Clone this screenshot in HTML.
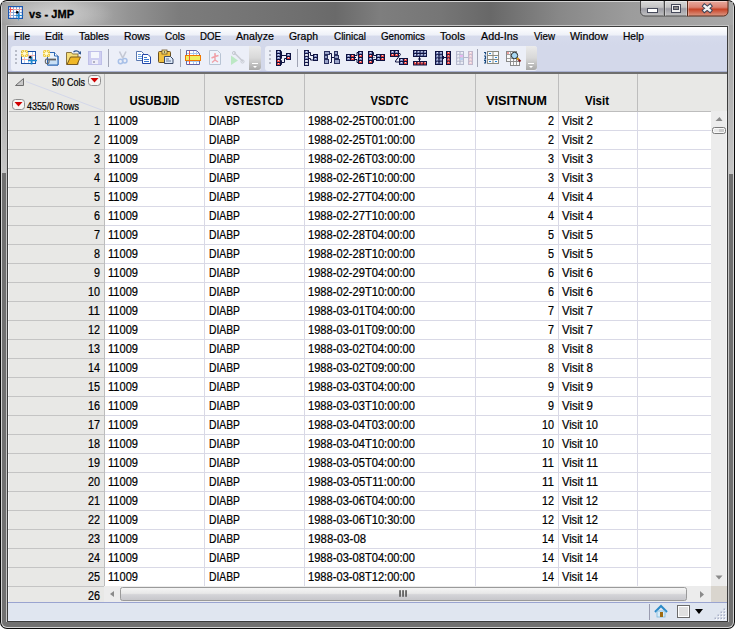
<!DOCTYPE html>
<html><head><meta charset="utf-8"><title>vs - JMP</title>
<style>html,body{margin:0;padding:0;background:#fff;width:735px;height:629px;overflow:hidden}svg{display:block}text{font-family:"Liberation Sans",sans-serif;stroke:#000;stroke-width:0.22px}</style>
</head><body>
<svg width="735" height="629" viewBox="0 0 735 629" font-family="Liberation Sans, sans-serif"><defs>
<linearGradient id="gTitle" x1="0" y1="0" x2="1" y2="0">
 <stop offset="0" stop-color="#9c9c9c"/>
 <stop offset="0.025" stop-color="#a8a8a8"/>
 <stop offset="0.08" stop-color="#b6b6b6"/>
 <stop offset="0.134" stop-color="#a6a6a6"/>
 <stop offset="0.175" stop-color="#939393"/>
 <stop offset="0.243" stop-color="#7c7c7c"/>
 <stop offset="0.408" stop-color="#6f6f6f"/>
 <stop offset="0.456" stop-color="#6a6a6a"/>
 <stop offset="0.517" stop-color="#7e7e7e"/>
 <stop offset="0.6" stop-color="#767676"/>
 <stop offset="0.668" stop-color="#686868"/>
 <stop offset="0.763" stop-color="#888888"/>
 <stop offset="0.859" stop-color="#9c9c9c"/>
 <stop offset="1" stop-color="#a8a8a8"/>
</linearGradient>
<radialGradient id="gGlow" cx="0.5" cy="0.5" r="0.5">
 <stop offset="0" stop-color="#e4e4e4" stop-opacity="0.6"/>
 <stop offset="0.6" stop-color="#d8d8d8" stop-opacity="0.3"/>
 <stop offset="1" stop-color="#d0d0d0" stop-opacity="0"/>
</radialGradient>
<linearGradient id="gMenu" x1="0" y1="0" x2="0" y2="1">
 <stop offset="0" stop-color="#ffffff"/>
 <stop offset="0.45" stop-color="#eef1f8"/>
 <stop offset="0.5" stop-color="#d6dbec"/>
 <stop offset="1" stop-color="#d3d8ea"/>
</linearGradient>
<linearGradient id="gChev" x1="0" y1="0" x2="0" y2="1">
 <stop offset="0" stop-color="#ebebeb"/>
 <stop offset="0.5" stop-color="#d8d8d8"/>
 <stop offset="1" stop-color="#a9a9a9"/>
</linearGradient>
<linearGradient id="gBtn" x1="0" y1="0" x2="0" y2="1">
 <stop offset="0" stop-color="#dcdcdc"/>
 <stop offset="0.45" stop-color="#c4c4c4"/>
 <stop offset="0.55" stop-color="#9c9ca4"/>
 <stop offset="1" stop-color="#c4c4c4"/>
</linearGradient>
<linearGradient id="gClose" x1="0" y1="0" x2="0" y2="1">
 <stop offset="0" stop-color="#eab0a4"/>
 <stop offset="0.45" stop-color="#dc8474"/>
 <stop offset="0.58" stop-color="#c84428"/>
 <stop offset="1" stop-color="#dc9a86"/>
</linearGradient>
<linearGradient id="gThumbH" x1="0" y1="0" x2="0" y2="1">
 <stop offset="0" stop-color="#f6f6f6"/>
 <stop offset="0.45" stop-color="#e8e8e8"/>
 <stop offset="0.55" stop-color="#d4d4d8"/>
 <stop offset="1" stop-color="#c6c6ca"/>
</linearGradient>
<linearGradient id="gThumbV" x1="0" y1="0" x2="1" y2="0">
 <stop offset="0" stop-color="#f4f4f4"/>
 <stop offset="0.5" stop-color="#e6e6e6"/>
 <stop offset="0.55" stop-color="#d6d6d6"/>
 <stop offset="1" stop-color="#c8c8c8"/>
</linearGradient>
</defs>
<rect x="0" y="0" width="735" height="629" rx="7" fill="#0a0a0a"/>
<rect x="1" y="1" width="733" height="627" rx="6" fill="#d4d4d4"/>
<rect x="2" y="2" width="731" height="625" rx="5" fill="#717171"/>
<rect x="2" y="2" width="731" height="23" fill="url(#gTitle)"/>
<ellipse cx="52" cy="14" rx="62" ry="18" fill="url(#gGlow)"/>
<linearGradient id="gSide" x1="0" y1="0" x2="0" y2="1"><stop offset="0" stop-color="#a2a2a2"/><stop offset="1" stop-color="#c6c6c6"/></linearGradient>
<rect x="2" y="25" width="4" height="148" fill="url(#gSide)"/>
<rect x="729" y="25" width="4" height="149" fill="url(#gSide)"/>
<rect x="6" y="25" width="723" height="597" fill="#c4c4c4" />
<rect x="7" y="26" width="721" height="596" fill="#3c3c3c" />
<rect x="8" y="27" width="719" height="44" fill="#d3d8ea" />
<rect x="8" y="27" width="719" height="18" fill="url(#gMenu)"/>
<rect x="8" y="71" width="719" height="1" fill="#aab2d2" />
<rect x="8" y="72" width="719" height="2" fill="#6e6e6e" />
<text x="14" y="40" font-size="11.5" fill="#000" text-anchor="start" font-weight="normal" textLength="16" lengthAdjust="spacingAndGlyphs" >File</text>
<text x="45" y="40" font-size="11.5" fill="#000" text-anchor="start" font-weight="normal" textLength="18" lengthAdjust="spacingAndGlyphs" >Edit</text>
<text x="79" y="40" font-size="11.5" fill="#000" text-anchor="start" font-weight="normal" textLength="30" lengthAdjust="spacingAndGlyphs" >Tables</text>
<text x="124" y="40" font-size="11.5" fill="#000" text-anchor="start" font-weight="normal" textLength="26" lengthAdjust="spacingAndGlyphs" >Rows</text>
<text x="165" y="40" font-size="11.5" fill="#000" text-anchor="start" font-weight="normal" textLength="20" lengthAdjust="spacingAndGlyphs" >Cols</text>
<text x="200" y="40" font-size="11.5" fill="#000" text-anchor="start" font-weight="normal" textLength="21" lengthAdjust="spacingAndGlyphs" >DOE</text>
<text x="236" y="40" font-size="11.5" fill="#000" text-anchor="start" font-weight="normal" textLength="38" lengthAdjust="spacingAndGlyphs" >Analyze</text>
<text x="289" y="40" font-size="11.5" fill="#000" text-anchor="start" font-weight="normal" textLength="29" lengthAdjust="spacingAndGlyphs" >Graph</text>
<text x="334" y="40" font-size="11.5" fill="#000" text-anchor="start" font-weight="normal" textLength="32" lengthAdjust="spacingAndGlyphs" >Clinical</text>
<text x="381" y="40" font-size="11.5" fill="#000" text-anchor="start" font-weight="normal" textLength="44" lengthAdjust="spacingAndGlyphs" >Genomics</text>
<text x="440" y="40" font-size="11.5" fill="#000" text-anchor="start" font-weight="normal" textLength="25" lengthAdjust="spacingAndGlyphs" >Tools</text>
<text x="481" y="40" font-size="11.5" fill="#000" text-anchor="start" font-weight="normal" textLength="37" lengthAdjust="spacingAndGlyphs" >Add-Ins</text>
<text x="534" y="40" font-size="11.5" fill="#000" text-anchor="start" font-weight="normal" textLength="21" lengthAdjust="spacingAndGlyphs" >View</text>
<text x="570" y="40" font-size="11.5" fill="#000" text-anchor="start" font-weight="normal" textLength="38" lengthAdjust="spacingAndGlyphs" >Window</text>
<text x="623" y="40" font-size="11.5" fill="#000" text-anchor="start" font-weight="normal" textLength="21" lengthAdjust="spacingAndGlyphs" >Help</text>
<rect x="11" y="46" width="250" height="25" rx="3" fill="#eceff8"/>
<path d="M249 46 h9 a3 3 0 0 1 3 3 v18 a3 3 0 0 1 -3 3 h-9 z" fill="url(#gChev)"/>
<rect x="265" y="46" width="272" height="25" rx="3" fill="#eceff8"/>
<path d="M526 46 h8 a3 3 0 0 1 3 3 v18 a3 3 0 0 1 -3 3 h-8 z" fill="url(#gChev)"/>
<rect x="252" y="63" width="6" height="1" fill="#ffffff" />
<path d="M253 66 l2 2 l2 -2 z" fill="#ffffff"/>
<rect x="528" y="63" width="6" height="1" fill="#ffffff" />
<path d="M529 66 l2 2 l2 -2 z" fill="#ffffff"/>
<rect x="15" y="50" width="2" height="2" fill="#b8bcc8" />
<rect x="15" y="54" width="2" height="2" fill="#b8bcc8" />
<rect x="15" y="58" width="2" height="2" fill="#b8bcc8" />
<rect x="15" y="62" width="2" height="2" fill="#b8bcc8" />
<rect x="269" y="50" width="2" height="2" fill="#b8bcc8" />
<rect x="269" y="54" width="2" height="2" fill="#b8bcc8" />
<rect x="269" y="58" width="2" height="2" fill="#b8bcc8" />
<rect x="269" y="62" width="2" height="2" fill="#b8bcc8" />
<rect x="108" y="49" width="1" height="18" fill="#a0a4b4" />
<rect x="180" y="49" width="1" height="18" fill="#a0a4b4" />
<rect x="297" y="49" width="1" height="18" fill="#a0a4b4" />
<rect x="477" y="49" width="1" height="18" fill="#a0a4b4" />
<rect x="21.5" y="51.5" width="14" height="12" fill="#ffffff" stroke="#1a50a8"/>
<path d="M24.5 52 v11 M28.5 52 v11 M32.5 52 v11" stroke="#b8cdf0"/>
<path d="M22 55.5 h13 M22 59.5 h13" stroke="#f4b0b0"/>
<rect x="21.0" y="50" width="7" height="7" rx="1.5" fill="#f0c838" opacity="0.9"/>
<path d="M21 53.5 h7 M24.5 50 v7 M22 51 l5 5 M27 51 l-5 5" stroke="#fff4b0" stroke-width="0.9"/>
<circle cx="24.5" cy="53.5" r="1.3" fill="#fffbe0"/>
<circle cx="30.3" cy="57.3" r="1.4" fill="#000"/>
<path d="M28 60.5 h9 M31.5 57.5 v7" stroke="#1a88d0" stroke-width="1.6"/>
<path d="M47.5 52.5 h7 l3.5 3.5 v9 h-10.5 z" fill="#eaf3fc" stroke="#2a66b4"/>
<rect x="48" y="60" width="10" height="5" fill="#c8e0f6"/>
<path d="M47.5 52.5 h7 l3.5 3.5 v9 h-10.5 z" fill="none" stroke="#2a66b4"/>
<path d="M54.5 52.5 v3.5 h3.5" fill="#ffffff" stroke="#2a66b4"/>
<path d="M48.5 59.5 h7.5" stroke="#606060" stroke-width="1.8"/>
<ellipse cx="47.2" cy="61.3" rx="1.9" ry="2.4" fill="none" stroke="#6a6a6a" stroke-width="1.1"/>
<rect x="43.0" y="50" width="7" height="7" rx="1.5" fill="#f0c838" opacity="0.9"/>
<path d="M43 53.5 h7 M46.5 50 v7 M44 51 l5 5 M49 51 l-5 5" stroke="#fff4b0" stroke-width="0.9"/>
<circle cx="46.5" cy="53.5" r="1.3" fill="#fffbe0"/>
<path d="M66.5 64.5 v-12 h5 l1 1.5 h5.5 v10.5 z" fill="#f6de7a" stroke="#8a7440"/>
<path d="M67 64.5 l3.5 -7.5 h10 l-3.5 7.5 z" fill="#f0b828" stroke="#7a5a20"/>
<path d="M73.5 52 q3 -2.5 6 0.5" fill="none" stroke="#30568e" stroke-width="1.3"/>
<path d="M78 53.5 l3 -2.5 v3.5 z" fill="#30568e"/>
<rect x="88.5" y="51.5" width="13" height="13" fill="#cfcff2" stroke="#c0c0e8"/>
<rect x="91" y="52" width="8" height="6" fill="#f4f6fc"/>
<rect x="92" y="60" width="6" height="4" fill="#eeeef8"/>
<rect x="93" y="61" width="2" height="2" fill="#b0b0c0"/>
<path d="M119.5 51.5 l3.5 7 M126 51.5 l-3.5 7" stroke="#c4c8d4" stroke-width="1.6"/>
<circle cx="120.5" cy="61.5" r="2.2" fill="none" stroke="#a8c0e8" stroke-width="1.5"/>
<circle cx="124.8" cy="60.8" r="2.2" fill="none" stroke="#a8c0e8" stroke-width="1.5"/>
<path d="M136.5 51.5 h5 l2 2 v7 h-7 z" fill="#fff" stroke="#5a78b0"/>
<path d="M138 54.5 h3 M138 56.5 h4 M138 58.5 h4" stroke="#6aa0e0"/>
<path d="M142.5 54.5 h5.5 l2.5 2.5 v6.5 h-8 z" fill="#fff" stroke="#2448a8"/>
<path d="M144 57.5 h3 M144 59.5 h5 M144 61.5 h5" stroke="#3a78d0"/>
<rect x="158.5" y="51.5" width="12" height="11" rx="1" fill="#f0c040" stroke="#6a5020"/>
<rect x="162" y="50" width="5" height="4" fill="#f8e890" stroke="#6a5020" stroke-width="0.8"/>
<circle cx="164.5" cy="52" r="0.8" fill="#333"/>
<path d="M164.5 56.5 h6 l2.5 2.5 v4.5 h-8.5 z" fill="#dce8f8" stroke="#3a4a68"/>
<path d="M166 59 h3 M166 61 h5" stroke="#6a7a98"/>
<path d="M186.5 50.5 h10 l3 3 v11 h-13 z" fill="#ffffff" stroke="#6464a4"/>
<path d="M187 53.5 h12 M187 61.5 h12 M193.5 51 v13 M196.5 51 v13" stroke="#a8c8f0"/>
<path d="M189.5 51 v13" stroke="#f05050"/>
<rect x="185.5" y="55.5" width="15" height="5" fill="#f0f060" stroke="#f07800"/>
<path d="M189.5 56 v4" stroke="#f06040"/>
<path d="M209.5 50.5 h8 l3 3 v11 h-11 z" fill="#eef4fc" stroke="#b8c4d4"/>
<path d="M215 54.5 v5.5 l-3 2.5 M215 60 l3 2 M211.5 58 l3.5 -1.5 l3.5 -1" fill="none" stroke="#f0a0a8" stroke-width="1.4"/>
<circle cx="215" cy="54" r="1" fill="#f0a0a8"/>
<path d="M231 55.5 L238 60.5 L231 65 Z" fill="#bce8c4"/>
<path d="M234 52.5 l9 9" stroke="#c8ccd4" stroke-width="1.6"/>
<circle cx="234" cy="53" r="1.6" fill="none" stroke="#c8ccd4"/>
<circle cx="242.5" cy="61.5" r="1.6" fill="none" stroke="#c8ccd4"/>
<g opacity="1.0"><rect x="276" y="50" width="5" height="16" fill="#0e1240"/><rect x="277" y="51" width="3" height="2" fill="#7f8cc0"/><rect x="278" y="51" width="1" height="1" fill="#ffffff" opacity="0.8"/><rect x="277" y="54" width="3" height="2" fill="#7f8cc0"/><rect x="278" y="54" width="1" height="1" fill="#ffffff" opacity="0.8"/><rect x="277" y="57" width="3" height="2" fill="#7f8cc0"/><rect x="278" y="57" width="1" height="1" fill="#ffffff" opacity="0.8"/><rect x="277" y="60" width="3" height="2" fill="#e0403c"/><rect x="278" y="60" width="1" height="1" fill="#ffffff" opacity="0.8"/><rect x="277" y="63" width="3" height="2" fill="#e0403c"/><rect x="278" y="63" width="1" height="1" fill="#ffffff" opacity="0.8"/></g>
<path d="M280 51.5 h1.5 v7 h-1.5 M281.5 55.5 h5 M280 60.5 h1.5 v4 h-1.5 M281.5 62.5 h3 v-4 h2" fill="none" stroke="#0e1240" stroke-width="1" opacity="1.0"/>
<g opacity="1.0"><rect x="286" y="53" width="5" height="7" fill="#0e1240"/><rect x="287" y="54" width="3" height="2" fill="#7f8cc0"/><rect x="288" y="54" width="1" height="1" fill="#ffffff" opacity="0.8"/><rect x="287" y="57" width="3" height="2" fill="#e0403c"/><rect x="288" y="57" width="1" height="1" fill="#ffffff" opacity="0.8"/></g>
<g opacity="1.0"><rect x="304" y="50" width="5" height="16" fill="#141848"/><rect x="305" y="51" width="3" height="2" fill="#7f8cc0"/><rect x="306" y="51" width="1" height="1" fill="#ffffff" opacity="0.8"/><rect x="305" y="54" width="3" height="2" fill="#c8ccdc"/><rect x="306" y="54" width="1" height="1" fill="#ffffff" opacity="0.8"/><rect x="305" y="57" width="3" height="2" fill="#7f8cc0"/><rect x="306" y="57" width="1" height="1" fill="#ffffff" opacity="0.8"/><rect x="305" y="60" width="3" height="2" fill="#c8ccdc"/><rect x="306" y="60" width="1" height="1" fill="#ffffff" opacity="0.8"/><rect x="305" y="63" width="3" height="2" fill="#c8ccdc"/><rect x="306" y="63" width="1" height="1" fill="#ffffff" opacity="0.8"/></g>
<path d="M308 52.5 h2.5 v3 h2.5 M308 58.5 h2.5 v1.5 h2.5" fill="none" stroke="#0e1240" stroke-width="1" opacity="1.0"/>
<g opacity="1.0"><rect x="313" y="54" width="5" height="7" fill="#0e1240"/><rect x="314" y="55" width="3" height="2" fill="#7f8cc0"/><rect x="315" y="55" width="1" height="1" fill="#ffffff" opacity="0.8"/><rect x="314" y="58" width="3" height="2" fill="#7f8cc0"/><rect x="315" y="58" width="1" height="1" fill="#ffffff" opacity="0.8"/></g>
<rect x="324" y="51" width="6" height="4" fill="#2a3060"/><rect x="325" y="52" width="4" height="2" fill="#9aa4c8"/>
<rect x="324" y="55" width="4" height="4" fill="#2a3060"/><rect x="325" y="56" width="2" height="2" fill="#9aa4c8"/>
<rect x="324" y="59" width="5" height="5" fill="#2a3060"/><rect x="325" y="60" width="3" height="3" fill="#9aa4c8"/>
<rect x="334" y="51" width="4" height="4" fill="#2a3060"/><rect x="335" y="52" width="2" height="2" fill="#9aa4c8"/>
<rect x="334" y="55" width="5" height="4" fill="#2a3060"/><rect x="335" y="56" width="3" height="2" fill="#9aa4c8"/>
<rect x="334" y="59" width="6" height="5" fill="#2a3060"/><rect x="335" y="60" width="4" height="3" fill="#9aa4c8"/>
<path d="M330 53.5 h1.5 v9 h-1.5 M331.5 57.5 h2.5" fill="none" stroke="#0e1240" stroke-width="1" opacity="1.0"/>
<g opacity="1.0"><rect x="346" y="54" width="9" height="7" fill="#0e1240"/><rect x="347" y="55" width="3" height="2" fill="#7f8cc0"/><rect x="348" y="55" width="1" height="1" fill="#ffffff" opacity="0.8"/><rect x="351" y="55" width="3" height="2" fill="#e0403c"/><rect x="352" y="55" width="1" height="1" fill="#ffffff" opacity="0.8"/><rect x="347" y="58" width="3" height="2" fill="#7f8cc0"/><rect x="348" y="58" width="1" height="1" fill="#ffffff" opacity="0.8"/><rect x="351" y="58" width="3" height="2" fill="#e0403c"/><rect x="352" y="58" width="1" height="1" fill="#ffffff" opacity="0.8"/></g>
<path d="M355 55.5 h2 v-3 h1 M355 59.5 h2 v3 h1 M354 57.5 h2" fill="none" stroke="#0e1240" stroke-width="1" opacity="1.0"/>
<g opacity="1.0"><rect x="358" y="51" width="5" height="13" fill="#0e1240"/><rect x="359" y="52" width="3" height="2" fill="#7f8cc0"/><rect x="360" y="52" width="1" height="1" fill="#ffffff" opacity="0.8"/><rect x="359" y="55" width="3" height="2" fill="#e0403c"/><rect x="360" y="55" width="1" height="1" fill="#ffffff" opacity="0.8"/><rect x="359" y="58" width="3" height="2" fill="#7f8cc0"/><rect x="360" y="58" width="1" height="1" fill="#ffffff" opacity="0.8"/><rect x="359" y="61" width="3" height="2" fill="#e0403c"/><rect x="360" y="61" width="1" height="1" fill="#ffffff" opacity="0.8"/></g>
<g opacity="1.0"><rect x="368" y="51" width="5" height="13" fill="#0e1240"/><rect x="369" y="52" width="3" height="2" fill="#7f8cc0"/><rect x="370" y="52" width="1" height="1" fill="#ffffff" opacity="0.8"/><rect x="369" y="55" width="3" height="2" fill="#e0403c"/><rect x="370" y="55" width="1" height="1" fill="#ffffff" opacity="0.8"/><rect x="369" y="58" width="3" height="2" fill="#7f8cc0"/><rect x="370" y="58" width="1" height="1" fill="#ffffff" opacity="0.8"/><rect x="369" y="61" width="3" height="2" fill="#e0403c"/><rect x="370" y="61" width="1" height="1" fill="#ffffff" opacity="0.8"/></g>
<path d="M372 52.5 h1.5 v3 h2.5 M372 62.5 h1.5 v-3 h2.5 M373.5 57.5 h1" fill="none" stroke="#0e1240" stroke-width="1" opacity="1.0"/>
<g opacity="1.0"><rect x="376" y="54" width="9" height="7" fill="#0e1240"/><rect x="377" y="55" width="3" height="2" fill="#7f8cc0"/><rect x="378" y="55" width="1" height="1" fill="#ffffff" opacity="0.8"/><rect x="381" y="55" width="3" height="2" fill="#e0403c"/><rect x="382" y="55" width="1" height="1" fill="#ffffff" opacity="0.8"/><rect x="377" y="58" width="3" height="2" fill="#7f8cc0"/><rect x="378" y="58" width="1" height="1" fill="#ffffff" opacity="0.8"/><rect x="381" y="58" width="3" height="2" fill="#e0403c"/><rect x="382" y="58" width="1" height="1" fill="#ffffff" opacity="0.8"/></g>
<g opacity="1.0"><rect x="390" y="50" width="9" height="7" fill="#0e1240"/><rect x="391" y="51" width="3" height="2" fill="#7f8cc0"/><rect x="392" y="51" width="1" height="1" fill="#ffffff" opacity="0.8"/><rect x="395" y="51" width="3" height="2" fill="#7f8cc0"/><rect x="396" y="51" width="1" height="1" fill="#ffffff" opacity="0.8"/><rect x="391" y="54" width="3" height="2" fill="#e0403c"/><rect x="392" y="54" width="1" height="1" fill="#ffffff" opacity="0.8"/><rect x="395" y="54" width="3" height="2" fill="#e0403c"/><rect x="396" y="54" width="1" height="1" fill="#ffffff" opacity="0.8"/></g>
<path d="M398 53.5 h2 l0.5 1 l-5 6.5 v1 h3.5" fill="none" stroke="#0e1240" stroke-width="1" opacity="1.0"/>
<g opacity="1.0"><rect x="399" y="58" width="9" height="7" fill="#0e1240"/><rect x="400" y="59" width="3" height="2" fill="#7f8cc0"/><rect x="401" y="59" width="1" height="1" fill="#ffffff" opacity="0.8"/><rect x="404" y="59" width="3" height="2" fill="#e0403c"/><rect x="405" y="59" width="1" height="1" fill="#ffffff" opacity="0.8"/><rect x="400" y="62" width="3" height="2" fill="#7f8cc0"/><rect x="401" y="62" width="1" height="1" fill="#ffffff" opacity="0.8"/><rect x="404" y="62" width="3" height="2" fill="#e0403c"/><rect x="405" y="62" width="1" height="1" fill="#ffffff" opacity="0.8"/></g>
<g opacity="1.0"><rect x="413" y="50" width="14.0" height="7" fill="#0e1240"/><rect x="414.0" y="51" width="2.25" height="2" fill="#7f8cc0"/><rect x="415.0" y="51" width="1" height="1" fill="#ffffff" opacity="0.8"/><rect x="417.25" y="51" width="2.25" height="2" fill="#7f8cc0"/><rect x="418.25" y="51" width="1" height="1" fill="#ffffff" opacity="0.8"/><rect x="420.5" y="51" width="2.25" height="2" fill="#7f8cc0"/><rect x="421.5" y="51" width="1" height="1" fill="#ffffff" opacity="0.8"/><rect x="423.75" y="51" width="2.25" height="2" fill="#7f8cc0"/><rect x="424.75" y="51" width="1" height="1" fill="#ffffff" opacity="0.8"/><rect x="414.0" y="54" width="2.25" height="2" fill="#7f8cc0"/><rect x="415.0" y="54" width="1" height="1" fill="#ffffff" opacity="0.8"/><rect x="417.25" y="54" width="2.25" height="2" fill="#7f8cc0"/><rect x="418.25" y="54" width="1" height="1" fill="#ffffff" opacity="0.8"/><rect x="420.5" y="54" width="2.25" height="2" fill="#7f8cc0"/><rect x="421.5" y="54" width="1" height="1" fill="#ffffff" opacity="0.8"/><rect x="423.75" y="54" width="2.25" height="2" fill="#7f8cc0"/><rect x="424.75" y="54" width="1" height="1" fill="#ffffff" opacity="0.8"/></g>
<path d="M419.5 57 v4 M418 59 h3" fill="none" stroke="#0e1240" stroke-width="1" opacity="1.0"/>
<g opacity="1.0"><rect x="413" y="61" width="14.0" height="4.5" fill="#0e1240"/><rect x="414.0" y="62.0" width="2.25" height="2.5" fill="#e0403c"/><rect x="415.0" y="62.0" width="1" height="1" fill="#ffffff" opacity="0.8"/><rect x="417.25" y="62.0" width="2.25" height="2.5" fill="#e0403c"/><rect x="418.25" y="62.0" width="1" height="1" fill="#ffffff" opacity="0.8"/><rect x="420.5" y="62.0" width="2.25" height="2.5" fill="#e0403c"/><rect x="421.5" y="62.0" width="1" height="1" fill="#ffffff" opacity="0.8"/><rect x="423.75" y="62.0" width="2.25" height="2.5" fill="#e0403c"/><rect x="424.75" y="62.0" width="1" height="1" fill="#ffffff" opacity="0.8"/></g>
<g opacity="1.0"><rect x="435" y="51" width="8.0" height="14.0" fill="#0e1240"/><rect x="436.0" y="52.0" width="2.5" height="2.25" fill="#7f8cc0"/><rect x="437.0" y="52.0" width="1" height="1" fill="#ffffff" opacity="0.8"/><rect x="439.5" y="52.0" width="2.5" height="2.25" fill="#7f8cc0"/><rect x="440.5" y="52.0" width="1" height="1" fill="#ffffff" opacity="0.8"/><rect x="436.0" y="55.25" width="2.5" height="2.25" fill="#7f8cc0"/><rect x="437.0" y="55.25" width="1" height="1" fill="#ffffff" opacity="0.8"/><rect x="439.5" y="55.25" width="2.5" height="2.25" fill="#7f8cc0"/><rect x="440.5" y="55.25" width="1" height="1" fill="#ffffff" opacity="0.8"/><rect x="436.0" y="58.5" width="2.5" height="2.25" fill="#7f8cc0"/><rect x="437.0" y="58.5" width="1" height="1" fill="#ffffff" opacity="0.8"/><rect x="439.5" y="58.5" width="2.5" height="2.25" fill="#7f8cc0"/><rect x="440.5" y="58.5" width="1" height="1" fill="#ffffff" opacity="0.8"/><rect x="436.0" y="61.75" width="2.5" height="2.25" fill="#7f8cc0"/><rect x="437.0" y="61.75" width="1" height="1" fill="#ffffff" opacity="0.8"/><rect x="439.5" y="61.75" width="2.5" height="2.25" fill="#7f8cc0"/><rect x="440.5" y="61.75" width="1" height="1" fill="#ffffff" opacity="0.8"/></g>
<path d="M442 57.5 h4 M443.5 56 v3" fill="none" stroke="#0e1240" stroke-width="1" opacity="1.0"/>
<g opacity="1.0"><rect x="446" y="51" width="5" height="14.0" fill="#0e1240"/><rect x="447" y="52.0" width="3" height="2.25" fill="#e0403c"/><rect x="448" y="52.0" width="1" height="1" fill="#ffffff" opacity="0.8"/><rect x="447" y="55.25" width="3" height="2.25" fill="#e0403c"/><rect x="448" y="55.25" width="1" height="1" fill="#ffffff" opacity="0.8"/><rect x="447" y="58.5" width="3" height="2.25" fill="#e0403c"/><rect x="448" y="58.5" width="1" height="1" fill="#ffffff" opacity="0.8"/><rect x="447" y="61.75" width="3" height="2.25" fill="#e0403c"/><rect x="448" y="61.75" width="1" height="1" fill="#ffffff" opacity="0.8"/></g>
<g opacity="1.0"><rect x="456" y="51" width="8.0" height="14.0" fill="#b4b8cc"/><rect x="457.0" y="52.0" width="2.5" height="2.25" fill="#e4e6f2"/><rect x="458.0" y="52.0" width="1" height="1" fill="#ffffff" opacity="0.8"/><rect x="460.5" y="52.0" width="2.5" height="2.25" fill="#e4e6f2"/><rect x="461.5" y="52.0" width="1" height="1" fill="#ffffff" opacity="0.8"/><rect x="457.0" y="55.25" width="2.5" height="2.25" fill="#e4e6f2"/><rect x="458.0" y="55.25" width="1" height="1" fill="#ffffff" opacity="0.8"/><rect x="460.5" y="55.25" width="2.5" height="2.25" fill="#e4e6f2"/><rect x="461.5" y="55.25" width="1" height="1" fill="#ffffff" opacity="0.8"/><rect x="457.0" y="58.5" width="2.5" height="2.25" fill="#e4e6f2"/><rect x="458.0" y="58.5" width="1" height="1" fill="#ffffff" opacity="0.8"/><rect x="460.5" y="58.5" width="2.5" height="2.25" fill="#e4e6f2"/><rect x="461.5" y="58.5" width="1" height="1" fill="#ffffff" opacity="0.8"/><rect x="457.0" y="61.75" width="2.5" height="2.25" fill="#e4e6f2"/><rect x="458.0" y="61.75" width="1" height="1" fill="#ffffff" opacity="0.8"/><rect x="460.5" y="61.75" width="2.5" height="2.25" fill="#e4e6f2"/><rect x="461.5" y="61.75" width="1" height="1" fill="#ffffff" opacity="0.8"/></g>
<rect x="460" y="55" width="3" height="2" fill="#e8b8f0"/><rect x="460" y="58" width="3" height="2" fill="#b8d0f0"/>
<path d="M463 57.5 h5" fill="none" stroke="#b4b8cc" stroke-width="1" opacity="1.0"/>
<g opacity="1.0"><rect x="468" y="51" width="5" height="14.0" fill="#c0b8cc"/><rect x="469" y="52.0" width="3" height="2.25" fill="#f0d0d8"/><rect x="470" y="52.0" width="1" height="1" fill="#ffffff" opacity="0.8"/><rect x="469" y="55.25" width="3" height="2.25" fill="#f0d0d8"/><rect x="470" y="55.25" width="1" height="1" fill="#ffffff" opacity="0.8"/><rect x="469" y="58.5" width="3" height="2.25" fill="#f0d0d8"/><rect x="470" y="58.5" width="1" height="1" fill="#ffffff" opacity="0.8"/><rect x="469" y="61.75" width="3" height="2.25" fill="#f0d0d8"/><rect x="470" y="61.75" width="1" height="1" fill="#ffffff" opacity="0.8"/></g>
<rect x="487.5" y="51.5" width="11" height="12" fill="#fafafa" stroke="#8a8a80"/>
<path d="M493 52 v11 M488 55.5 h10 M488 59.5 h10" stroke="#8a8a80"/>
<rect x="489" y="53" width="2" height="1" fill="#2a88d8"/><rect x="495" y="57" width="2" height="1" fill="#2a88d8"/><rect x="489" y="61" width="2" height="1" fill="#2a88d8"/><rect x="495" y="61" width="2" height="1" fill="#2a88d8"/>
<path d="M484 52.5 h1.5 v2 M484 56 h1.5 v3 h-1.5 M484 60.5 h1.5 v2.5 h-1.5" fill="none" stroke="#1a4a80" stroke-width="1.2"/>
<rect x="506.5" y="51.5" width="10" height="10" fill="#fafafa" stroke="#8a8a8a"/>
<path d="M507 54.5 h9 M507 58.5 h9 M510.5 52 v9 M513.5 52 v9" stroke="#a0a0a0"/>
<rect x="507" y="52" width="2" height="2" fill="#f0a0a0"/>
<rect x="510.5" y="61.5" width="9" height="4" fill="#fafafa" stroke="#8a8a8a"/>
<path d="M513.5 62 v3 M516.5 62 v3" stroke="#a0a0a0"/>
<path d="M517 58 l3.5 3.5" stroke="#8a2020" stroke-width="2"/>
<path d="M517 58 l1.5 1.5" stroke="#e0b020" stroke-width="2"/>
<circle cx="514.5" cy="55.5" r="3.2" fill="#a8d8f4" stroke="#2a2a2a" stroke-width="1"/>
<rect x="8" y="74" width="719" height="37" fill="#e8e8e6" />
<rect x="8" y="111" width="703" height="1" fill="#bdbdbd" />
<rect x="8" y="112" width="96" height="490" fill="#e8e8e6" />
<rect x="8" y="74" width="1" height="528" fill="#f6f6f6" />
<rect x="105" y="112" width="606" height="475" fill="#ffffff" />
<rect x="711" y="111" width="16" height="475" fill="#ececec" />
<rect x="726" y="111" width="1" height="475" fill="#f4f4f4" />
<rect x="104" y="586" width="607" height="16" fill="#ececec" />
<rect x="711" y="586" width="16" height="16" fill="#d9d5ce" />
<rect x="104" y="74" width="1" height="37" fill="#bdbdbd" />
<rect x="204" y="74" width="1" height="37" fill="#bdbdbd" />
<rect x="304" y="74" width="1" height="37" fill="#bdbdbd" />
<rect x="475" y="74" width="1" height="37" fill="#bdbdbd" />
<rect x="558" y="74" width="1" height="37" fill="#bdbdbd" />
<rect x="637" y="74" width="1" height="37" fill="#bdbdbd" />
<rect x="104" y="112" width="1" height="474" fill="#bdbdbd" />
<rect x="204" y="112" width="1" height="474" fill="#d9d9e6" />
<rect x="304" y="112" width="1" height="474" fill="#d9d9e6" />
<rect x="475" y="112" width="1" height="474" fill="#d9d9e6" />
<rect x="558" y="112" width="1" height="474" fill="#d9d9e6" />
<rect x="637" y="112" width="1" height="474" fill="#d9d9e6" />
<rect x="8" y="130" width="96" height="1" fill="#c4c4c4" />
<rect x="105" y="130" width="606" height="1" fill="#d9d9e6" />
<rect x="8" y="149" width="96" height="1" fill="#c4c4c4" />
<rect x="105" y="149" width="606" height="1" fill="#d9d9e6" />
<rect x="8" y="168" width="96" height="1" fill="#c4c4c4" />
<rect x="105" y="168" width="606" height="1" fill="#d9d9e6" />
<rect x="8" y="187" width="96" height="1" fill="#c4c4c4" />
<rect x="105" y="187" width="606" height="1" fill="#d9d9e6" />
<rect x="8" y="206" width="96" height="1" fill="#c4c4c4" />
<rect x="105" y="206" width="606" height="1" fill="#d9d9e6" />
<rect x="8" y="225" width="96" height="1" fill="#c4c4c4" />
<rect x="105" y="225" width="606" height="1" fill="#d9d9e6" />
<rect x="8" y="244" width="96" height="1" fill="#c4c4c4" />
<rect x="105" y="244" width="606" height="1" fill="#d9d9e6" />
<rect x="8" y="263" width="96" height="1" fill="#c4c4c4" />
<rect x="105" y="263" width="606" height="1" fill="#d9d9e6" />
<rect x="8" y="282" width="96" height="1" fill="#c4c4c4" />
<rect x="105" y="282" width="606" height="1" fill="#d9d9e6" />
<rect x="8" y="301" width="96" height="1" fill="#c4c4c4" />
<rect x="105" y="301" width="606" height="1" fill="#d9d9e6" />
<rect x="8" y="320" width="96" height="1" fill="#c4c4c4" />
<rect x="105" y="320" width="606" height="1" fill="#d9d9e6" />
<rect x="8" y="339" width="96" height="1" fill="#c4c4c4" />
<rect x="105" y="339" width="606" height="1" fill="#d9d9e6" />
<rect x="8" y="358" width="96" height="1" fill="#c4c4c4" />
<rect x="105" y="358" width="606" height="1" fill="#d9d9e6" />
<rect x="8" y="377" width="96" height="1" fill="#c4c4c4" />
<rect x="105" y="377" width="606" height="1" fill="#d9d9e6" />
<rect x="8" y="396" width="96" height="1" fill="#c4c4c4" />
<rect x="105" y="396" width="606" height="1" fill="#d9d9e6" />
<rect x="8" y="415" width="96" height="1" fill="#c4c4c4" />
<rect x="105" y="415" width="606" height="1" fill="#d9d9e6" />
<rect x="8" y="434" width="96" height="1" fill="#c4c4c4" />
<rect x="105" y="434" width="606" height="1" fill="#d9d9e6" />
<rect x="8" y="453" width="96" height="1" fill="#c4c4c4" />
<rect x="105" y="453" width="606" height="1" fill="#d9d9e6" />
<rect x="8" y="472" width="96" height="1" fill="#c4c4c4" />
<rect x="105" y="472" width="606" height="1" fill="#d9d9e6" />
<rect x="8" y="491" width="96" height="1" fill="#c4c4c4" />
<rect x="105" y="491" width="606" height="1" fill="#d9d9e6" />
<rect x="8" y="510" width="96" height="1" fill="#c4c4c4" />
<rect x="105" y="510" width="606" height="1" fill="#d9d9e6" />
<rect x="8" y="529" width="96" height="1" fill="#c4c4c4" />
<rect x="105" y="529" width="606" height="1" fill="#d9d9e6" />
<rect x="8" y="548" width="96" height="1" fill="#c4c4c4" />
<rect x="105" y="548" width="606" height="1" fill="#d9d9e6" />
<rect x="8" y="567" width="96" height="1" fill="#c4c4c4" />
<rect x="105" y="567" width="606" height="1" fill="#d9d9e6" />
<rect x="8" y="586" width="96" height="1" fill="#c4c4c4" />
<line x1="26" y1="81.5" x2="103" y2="110.5" stroke="#d4d8ea" stroke-width="1"/>
<path d="M15.5 85.5 L23.5 78.5 L23.5 85.5 Z" fill="#c8c8c8" stroke="#6e6e6e" stroke-width="1"/>
<rect x="88.5" y="75.5" width="12" height="10" rx="3" fill="#f6f6f4" stroke="#8e8e8e"/>
<path d="M90.5 78 h8 l-4 4.5 z" fill="#d00000"/>
<rect x="12.5" y="99.5" width="12" height="10" rx="3" fill="#f6f6f4" stroke="#8e8e8e"/>
<path d="M14.5 102 h8 l-4 4.5 z" fill="#d00000"/>
<text x="52" y="86" font-size="10.5" fill="#000" text-anchor="start" font-weight="normal" textLength="33" lengthAdjust="spacingAndGlyphs" >5/0 Cols</text>
<text x="27" y="110" font-size="10.5" fill="#000" text-anchor="start" font-weight="normal" textLength="52" lengthAdjust="spacingAndGlyphs" >4355/0 Rows</text>
<text x="154.5" y="105" font-size="12.5" fill="#000" text-anchor="middle" font-weight="bold" textLength="50" lengthAdjust="spacingAndGlyphs" style="stroke-width:0.05px">USUBJID</text>
<text x="254" y="105" font-size="12.5" fill="#000" text-anchor="middle" font-weight="bold" textLength="59" lengthAdjust="spacingAndGlyphs" style="stroke-width:0.05px">VSTESTCD</text>
<text x="389.5" y="105" font-size="12.5" fill="#000" text-anchor="middle" font-weight="bold" textLength="38" lengthAdjust="spacingAndGlyphs" style="stroke-width:0.05px">VSDTC</text>
<text x="516.5" y="105" font-size="12.5" fill="#000" text-anchor="middle" font-weight="bold" textLength="61" lengthAdjust="spacingAndGlyphs" style="stroke-width:0.05px">VISITNUM</text>
<text x="597" y="105" font-size="12.5" fill="#000" text-anchor="middle" font-weight="bold" textLength="24" lengthAdjust="spacingAndGlyphs" style="stroke-width:0.05px">Visit</text>
<text x="100" y="125" font-size="12" fill="#000" text-anchor="end" font-weight="normal" textLength="6" lengthAdjust="spacingAndGlyphs" >1</text>
<text x="108" y="125" font-size="12" fill="#000" text-anchor="start" font-weight="normal" textLength="30" lengthAdjust="spacingAndGlyphs" >11009</text>
<text x="209" y="125" font-size="12" fill="#000" text-anchor="start" font-weight="normal" textLength="31" lengthAdjust="spacingAndGlyphs" >DIABP</text>
<text x="308" y="125" font-size="12" fill="#000" text-anchor="start" font-weight="normal" textLength="107" lengthAdjust="spacingAndGlyphs" >1988-02-25T00:01:00</text>
<text x="554" y="125" font-size="12" fill="#000" text-anchor="end" font-weight="normal" textLength="6" lengthAdjust="spacingAndGlyphs" >2</text>
<text x="562" y="125" font-size="12" fill="#000" text-anchor="start" font-weight="normal" textLength="31" lengthAdjust="spacingAndGlyphs" >Visit 2</text>
<text x="100" y="144" font-size="12" fill="#000" text-anchor="end" font-weight="normal" textLength="6" lengthAdjust="spacingAndGlyphs" >2</text>
<text x="108" y="144" font-size="12" fill="#000" text-anchor="start" font-weight="normal" textLength="30" lengthAdjust="spacingAndGlyphs" >11009</text>
<text x="209" y="144" font-size="12" fill="#000" text-anchor="start" font-weight="normal" textLength="31" lengthAdjust="spacingAndGlyphs" >DIABP</text>
<text x="308" y="144" font-size="12" fill="#000" text-anchor="start" font-weight="normal" textLength="107" lengthAdjust="spacingAndGlyphs" >1988-02-25T01:00:00</text>
<text x="554" y="144" font-size="12" fill="#000" text-anchor="end" font-weight="normal" textLength="6" lengthAdjust="spacingAndGlyphs" >2</text>
<text x="562" y="144" font-size="12" fill="#000" text-anchor="start" font-weight="normal" textLength="31" lengthAdjust="spacingAndGlyphs" >Visit 2</text>
<text x="100" y="163" font-size="12" fill="#000" text-anchor="end" font-weight="normal" textLength="6" lengthAdjust="spacingAndGlyphs" >3</text>
<text x="108" y="163" font-size="12" fill="#000" text-anchor="start" font-weight="normal" textLength="30" lengthAdjust="spacingAndGlyphs" >11009</text>
<text x="209" y="163" font-size="12" fill="#000" text-anchor="start" font-weight="normal" textLength="31" lengthAdjust="spacingAndGlyphs" >DIABP</text>
<text x="308" y="163" font-size="12" fill="#000" text-anchor="start" font-weight="normal" textLength="107" lengthAdjust="spacingAndGlyphs" >1988-02-26T03:00:00</text>
<text x="554" y="163" font-size="12" fill="#000" text-anchor="end" font-weight="normal" textLength="6" lengthAdjust="spacingAndGlyphs" >3</text>
<text x="562" y="163" font-size="12" fill="#000" text-anchor="start" font-weight="normal" textLength="31" lengthAdjust="spacingAndGlyphs" >Visit 3</text>
<text x="100" y="182" font-size="12" fill="#000" text-anchor="end" font-weight="normal" textLength="6" lengthAdjust="spacingAndGlyphs" >4</text>
<text x="108" y="182" font-size="12" fill="#000" text-anchor="start" font-weight="normal" textLength="30" lengthAdjust="spacingAndGlyphs" >11009</text>
<text x="209" y="182" font-size="12" fill="#000" text-anchor="start" font-weight="normal" textLength="31" lengthAdjust="spacingAndGlyphs" >DIABP</text>
<text x="308" y="182" font-size="12" fill="#000" text-anchor="start" font-weight="normal" textLength="107" lengthAdjust="spacingAndGlyphs" >1988-02-26T10:00:00</text>
<text x="554" y="182" font-size="12" fill="#000" text-anchor="end" font-weight="normal" textLength="6" lengthAdjust="spacingAndGlyphs" >3</text>
<text x="562" y="182" font-size="12" fill="#000" text-anchor="start" font-weight="normal" textLength="31" lengthAdjust="spacingAndGlyphs" >Visit 3</text>
<text x="100" y="201" font-size="12" fill="#000" text-anchor="end" font-weight="normal" textLength="6" lengthAdjust="spacingAndGlyphs" >5</text>
<text x="108" y="201" font-size="12" fill="#000" text-anchor="start" font-weight="normal" textLength="30" lengthAdjust="spacingAndGlyphs" >11009</text>
<text x="209" y="201" font-size="12" fill="#000" text-anchor="start" font-weight="normal" textLength="31" lengthAdjust="spacingAndGlyphs" >DIABP</text>
<text x="308" y="201" font-size="12" fill="#000" text-anchor="start" font-weight="normal" textLength="107" lengthAdjust="spacingAndGlyphs" >1988-02-27T04:00:00</text>
<text x="554" y="201" font-size="12" fill="#000" text-anchor="end" font-weight="normal" textLength="6" lengthAdjust="spacingAndGlyphs" >4</text>
<text x="562" y="201" font-size="12" fill="#000" text-anchor="start" font-weight="normal" textLength="31" lengthAdjust="spacingAndGlyphs" >Visit 4</text>
<text x="100" y="220" font-size="12" fill="#000" text-anchor="end" font-weight="normal" textLength="6" lengthAdjust="spacingAndGlyphs" >6</text>
<text x="108" y="220" font-size="12" fill="#000" text-anchor="start" font-weight="normal" textLength="30" lengthAdjust="spacingAndGlyphs" >11009</text>
<text x="209" y="220" font-size="12" fill="#000" text-anchor="start" font-weight="normal" textLength="31" lengthAdjust="spacingAndGlyphs" >DIABP</text>
<text x="308" y="220" font-size="12" fill="#000" text-anchor="start" font-weight="normal" textLength="107" lengthAdjust="spacingAndGlyphs" >1988-02-27T10:00:00</text>
<text x="554" y="220" font-size="12" fill="#000" text-anchor="end" font-weight="normal" textLength="6" lengthAdjust="spacingAndGlyphs" >4</text>
<text x="562" y="220" font-size="12" fill="#000" text-anchor="start" font-weight="normal" textLength="31" lengthAdjust="spacingAndGlyphs" >Visit 4</text>
<text x="100" y="239" font-size="12" fill="#000" text-anchor="end" font-weight="normal" textLength="6" lengthAdjust="spacingAndGlyphs" >7</text>
<text x="108" y="239" font-size="12" fill="#000" text-anchor="start" font-weight="normal" textLength="30" lengthAdjust="spacingAndGlyphs" >11009</text>
<text x="209" y="239" font-size="12" fill="#000" text-anchor="start" font-weight="normal" textLength="31" lengthAdjust="spacingAndGlyphs" >DIABP</text>
<text x="308" y="239" font-size="12" fill="#000" text-anchor="start" font-weight="normal" textLength="107" lengthAdjust="spacingAndGlyphs" >1988-02-28T04:00:00</text>
<text x="554" y="239" font-size="12" fill="#000" text-anchor="end" font-weight="normal" textLength="6" lengthAdjust="spacingAndGlyphs" >5</text>
<text x="562" y="239" font-size="12" fill="#000" text-anchor="start" font-weight="normal" textLength="31" lengthAdjust="spacingAndGlyphs" >Visit 5</text>
<text x="100" y="258" font-size="12" fill="#000" text-anchor="end" font-weight="normal" textLength="6" lengthAdjust="spacingAndGlyphs" >8</text>
<text x="108" y="258" font-size="12" fill="#000" text-anchor="start" font-weight="normal" textLength="30" lengthAdjust="spacingAndGlyphs" >11009</text>
<text x="209" y="258" font-size="12" fill="#000" text-anchor="start" font-weight="normal" textLength="31" lengthAdjust="spacingAndGlyphs" >DIABP</text>
<text x="308" y="258" font-size="12" fill="#000" text-anchor="start" font-weight="normal" textLength="107" lengthAdjust="spacingAndGlyphs" >1988-02-28T10:00:00</text>
<text x="554" y="258" font-size="12" fill="#000" text-anchor="end" font-weight="normal" textLength="6" lengthAdjust="spacingAndGlyphs" >5</text>
<text x="562" y="258" font-size="12" fill="#000" text-anchor="start" font-weight="normal" textLength="31" lengthAdjust="spacingAndGlyphs" >Visit 5</text>
<text x="100" y="277" font-size="12" fill="#000" text-anchor="end" font-weight="normal" textLength="6" lengthAdjust="spacingAndGlyphs" >9</text>
<text x="108" y="277" font-size="12" fill="#000" text-anchor="start" font-weight="normal" textLength="30" lengthAdjust="spacingAndGlyphs" >11009</text>
<text x="209" y="277" font-size="12" fill="#000" text-anchor="start" font-weight="normal" textLength="31" lengthAdjust="spacingAndGlyphs" >DIABP</text>
<text x="308" y="277" font-size="12" fill="#000" text-anchor="start" font-weight="normal" textLength="107" lengthAdjust="spacingAndGlyphs" >1988-02-29T04:00:00</text>
<text x="554" y="277" font-size="12" fill="#000" text-anchor="end" font-weight="normal" textLength="6" lengthAdjust="spacingAndGlyphs" >6</text>
<text x="562" y="277" font-size="12" fill="#000" text-anchor="start" font-weight="normal" textLength="31" lengthAdjust="spacingAndGlyphs" >Visit 6</text>
<text x="100" y="296" font-size="12" fill="#000" text-anchor="end" font-weight="normal" textLength="12" lengthAdjust="spacingAndGlyphs" >10</text>
<text x="108" y="296" font-size="12" fill="#000" text-anchor="start" font-weight="normal" textLength="30" lengthAdjust="spacingAndGlyphs" >11009</text>
<text x="209" y="296" font-size="12" fill="#000" text-anchor="start" font-weight="normal" textLength="31" lengthAdjust="spacingAndGlyphs" >DIABP</text>
<text x="308" y="296" font-size="12" fill="#000" text-anchor="start" font-weight="normal" textLength="107" lengthAdjust="spacingAndGlyphs" >1988-02-29T10:00:00</text>
<text x="554" y="296" font-size="12" fill="#000" text-anchor="end" font-weight="normal" textLength="6" lengthAdjust="spacingAndGlyphs" >6</text>
<text x="562" y="296" font-size="12" fill="#000" text-anchor="start" font-weight="normal" textLength="31" lengthAdjust="spacingAndGlyphs" >Visit 6</text>
<text x="100" y="315" font-size="12" fill="#000" text-anchor="end" font-weight="normal" textLength="12" lengthAdjust="spacingAndGlyphs" >11</text>
<text x="108" y="315" font-size="12" fill="#000" text-anchor="start" font-weight="normal" textLength="30" lengthAdjust="spacingAndGlyphs" >11009</text>
<text x="209" y="315" font-size="12" fill="#000" text-anchor="start" font-weight="normal" textLength="31" lengthAdjust="spacingAndGlyphs" >DIABP</text>
<text x="308" y="315" font-size="12" fill="#000" text-anchor="start" font-weight="normal" textLength="107" lengthAdjust="spacingAndGlyphs" >1988-03-01T04:00:00</text>
<text x="554" y="315" font-size="12" fill="#000" text-anchor="end" font-weight="normal" textLength="6" lengthAdjust="spacingAndGlyphs" >7</text>
<text x="562" y="315" font-size="12" fill="#000" text-anchor="start" font-weight="normal" textLength="31" lengthAdjust="spacingAndGlyphs" >Visit 7</text>
<text x="100" y="334" font-size="12" fill="#000" text-anchor="end" font-weight="normal" textLength="12" lengthAdjust="spacingAndGlyphs" >12</text>
<text x="108" y="334" font-size="12" fill="#000" text-anchor="start" font-weight="normal" textLength="30" lengthAdjust="spacingAndGlyphs" >11009</text>
<text x="209" y="334" font-size="12" fill="#000" text-anchor="start" font-weight="normal" textLength="31" lengthAdjust="spacingAndGlyphs" >DIABP</text>
<text x="308" y="334" font-size="12" fill="#000" text-anchor="start" font-weight="normal" textLength="107" lengthAdjust="spacingAndGlyphs" >1988-03-01T09:00:00</text>
<text x="554" y="334" font-size="12" fill="#000" text-anchor="end" font-weight="normal" textLength="6" lengthAdjust="spacingAndGlyphs" >7</text>
<text x="562" y="334" font-size="12" fill="#000" text-anchor="start" font-weight="normal" textLength="31" lengthAdjust="spacingAndGlyphs" >Visit 7</text>
<text x="100" y="353" font-size="12" fill="#000" text-anchor="end" font-weight="normal" textLength="12" lengthAdjust="spacingAndGlyphs" >13</text>
<text x="108" y="353" font-size="12" fill="#000" text-anchor="start" font-weight="normal" textLength="30" lengthAdjust="spacingAndGlyphs" >11009</text>
<text x="209" y="353" font-size="12" fill="#000" text-anchor="start" font-weight="normal" textLength="31" lengthAdjust="spacingAndGlyphs" >DIABP</text>
<text x="308" y="353" font-size="12" fill="#000" text-anchor="start" font-weight="normal" textLength="107" lengthAdjust="spacingAndGlyphs" >1988-03-02T04:00:00</text>
<text x="554" y="353" font-size="12" fill="#000" text-anchor="end" font-weight="normal" textLength="6" lengthAdjust="spacingAndGlyphs" >8</text>
<text x="562" y="353" font-size="12" fill="#000" text-anchor="start" font-weight="normal" textLength="31" lengthAdjust="spacingAndGlyphs" >Visit 8</text>
<text x="100" y="372" font-size="12" fill="#000" text-anchor="end" font-weight="normal" textLength="12" lengthAdjust="spacingAndGlyphs" >14</text>
<text x="108" y="372" font-size="12" fill="#000" text-anchor="start" font-weight="normal" textLength="30" lengthAdjust="spacingAndGlyphs" >11009</text>
<text x="209" y="372" font-size="12" fill="#000" text-anchor="start" font-weight="normal" textLength="31" lengthAdjust="spacingAndGlyphs" >DIABP</text>
<text x="308" y="372" font-size="12" fill="#000" text-anchor="start" font-weight="normal" textLength="107" lengthAdjust="spacingAndGlyphs" >1988-03-02T09:00:00</text>
<text x="554" y="372" font-size="12" fill="#000" text-anchor="end" font-weight="normal" textLength="6" lengthAdjust="spacingAndGlyphs" >8</text>
<text x="562" y="372" font-size="12" fill="#000" text-anchor="start" font-weight="normal" textLength="31" lengthAdjust="spacingAndGlyphs" >Visit 8</text>
<text x="100" y="391" font-size="12" fill="#000" text-anchor="end" font-weight="normal" textLength="12" lengthAdjust="spacingAndGlyphs" >15</text>
<text x="108" y="391" font-size="12" fill="#000" text-anchor="start" font-weight="normal" textLength="30" lengthAdjust="spacingAndGlyphs" >11009</text>
<text x="209" y="391" font-size="12" fill="#000" text-anchor="start" font-weight="normal" textLength="31" lengthAdjust="spacingAndGlyphs" >DIABP</text>
<text x="308" y="391" font-size="12" fill="#000" text-anchor="start" font-weight="normal" textLength="107" lengthAdjust="spacingAndGlyphs" >1988-03-03T04:00:00</text>
<text x="554" y="391" font-size="12" fill="#000" text-anchor="end" font-weight="normal" textLength="6" lengthAdjust="spacingAndGlyphs" >9</text>
<text x="562" y="391" font-size="12" fill="#000" text-anchor="start" font-weight="normal" textLength="31" lengthAdjust="spacingAndGlyphs" >Visit 9</text>
<text x="100" y="410" font-size="12" fill="#000" text-anchor="end" font-weight="normal" textLength="12" lengthAdjust="spacingAndGlyphs" >16</text>
<text x="108" y="410" font-size="12" fill="#000" text-anchor="start" font-weight="normal" textLength="30" lengthAdjust="spacingAndGlyphs" >11009</text>
<text x="209" y="410" font-size="12" fill="#000" text-anchor="start" font-weight="normal" textLength="31" lengthAdjust="spacingAndGlyphs" >DIABP</text>
<text x="308" y="410" font-size="12" fill="#000" text-anchor="start" font-weight="normal" textLength="107" lengthAdjust="spacingAndGlyphs" >1988-03-03T10:00:00</text>
<text x="554" y="410" font-size="12" fill="#000" text-anchor="end" font-weight="normal" textLength="6" lengthAdjust="spacingAndGlyphs" >9</text>
<text x="562" y="410" font-size="12" fill="#000" text-anchor="start" font-weight="normal" textLength="31" lengthAdjust="spacingAndGlyphs" >Visit 9</text>
<text x="100" y="429" font-size="12" fill="#000" text-anchor="end" font-weight="normal" textLength="12" lengthAdjust="spacingAndGlyphs" >17</text>
<text x="108" y="429" font-size="12" fill="#000" text-anchor="start" font-weight="normal" textLength="30" lengthAdjust="spacingAndGlyphs" >11009</text>
<text x="209" y="429" font-size="12" fill="#000" text-anchor="start" font-weight="normal" textLength="31" lengthAdjust="spacingAndGlyphs" >DIABP</text>
<text x="308" y="429" font-size="12" fill="#000" text-anchor="start" font-weight="normal" textLength="107" lengthAdjust="spacingAndGlyphs" >1988-03-04T03:00:00</text>
<text x="554" y="429" font-size="12" fill="#000" text-anchor="end" font-weight="normal" textLength="12" lengthAdjust="spacingAndGlyphs" >10</text>
<text x="562" y="429" font-size="12" fill="#000" text-anchor="start" font-weight="normal" textLength="36" lengthAdjust="spacingAndGlyphs" >Visit 10</text>
<text x="100" y="448" font-size="12" fill="#000" text-anchor="end" font-weight="normal" textLength="12" lengthAdjust="spacingAndGlyphs" >18</text>
<text x="108" y="448" font-size="12" fill="#000" text-anchor="start" font-weight="normal" textLength="30" lengthAdjust="spacingAndGlyphs" >11009</text>
<text x="209" y="448" font-size="12" fill="#000" text-anchor="start" font-weight="normal" textLength="31" lengthAdjust="spacingAndGlyphs" >DIABP</text>
<text x="308" y="448" font-size="12" fill="#000" text-anchor="start" font-weight="normal" textLength="107" lengthAdjust="spacingAndGlyphs" >1988-03-04T10:00:00</text>
<text x="554" y="448" font-size="12" fill="#000" text-anchor="end" font-weight="normal" textLength="12" lengthAdjust="spacingAndGlyphs" >10</text>
<text x="562" y="448" font-size="12" fill="#000" text-anchor="start" font-weight="normal" textLength="36" lengthAdjust="spacingAndGlyphs" >Visit 10</text>
<text x="100" y="467" font-size="12" fill="#000" text-anchor="end" font-weight="normal" textLength="12" lengthAdjust="spacingAndGlyphs" >19</text>
<text x="108" y="467" font-size="12" fill="#000" text-anchor="start" font-weight="normal" textLength="30" lengthAdjust="spacingAndGlyphs" >11009</text>
<text x="209" y="467" font-size="12" fill="#000" text-anchor="start" font-weight="normal" textLength="31" lengthAdjust="spacingAndGlyphs" >DIABP</text>
<text x="308" y="467" font-size="12" fill="#000" text-anchor="start" font-weight="normal" textLength="107" lengthAdjust="spacingAndGlyphs" >1988-03-05T04:00:00</text>
<text x="554" y="467" font-size="12" fill="#000" text-anchor="end" font-weight="normal" textLength="12" lengthAdjust="spacingAndGlyphs" >11</text>
<text x="562" y="467" font-size="12" fill="#000" text-anchor="start" font-weight="normal" textLength="36" lengthAdjust="spacingAndGlyphs" >Visit 11</text>
<text x="100" y="486" font-size="12" fill="#000" text-anchor="end" font-weight="normal" textLength="12" lengthAdjust="spacingAndGlyphs" >20</text>
<text x="108" y="486" font-size="12" fill="#000" text-anchor="start" font-weight="normal" textLength="30" lengthAdjust="spacingAndGlyphs" >11009</text>
<text x="209" y="486" font-size="12" fill="#000" text-anchor="start" font-weight="normal" textLength="31" lengthAdjust="spacingAndGlyphs" >DIABP</text>
<text x="308" y="486" font-size="12" fill="#000" text-anchor="start" font-weight="normal" textLength="107" lengthAdjust="spacingAndGlyphs" >1988-03-05T11:00:00</text>
<text x="554" y="486" font-size="12" fill="#000" text-anchor="end" font-weight="normal" textLength="12" lengthAdjust="spacingAndGlyphs" >11</text>
<text x="562" y="486" font-size="12" fill="#000" text-anchor="start" font-weight="normal" textLength="36" lengthAdjust="spacingAndGlyphs" >Visit 11</text>
<text x="100" y="505" font-size="12" fill="#000" text-anchor="end" font-weight="normal" textLength="12" lengthAdjust="spacingAndGlyphs" >21</text>
<text x="108" y="505" font-size="12" fill="#000" text-anchor="start" font-weight="normal" textLength="30" lengthAdjust="spacingAndGlyphs" >11009</text>
<text x="209" y="505" font-size="12" fill="#000" text-anchor="start" font-weight="normal" textLength="31" lengthAdjust="spacingAndGlyphs" >DIABP</text>
<text x="308" y="505" font-size="12" fill="#000" text-anchor="start" font-weight="normal" textLength="107" lengthAdjust="spacingAndGlyphs" >1988-03-06T04:00:00</text>
<text x="554" y="505" font-size="12" fill="#000" text-anchor="end" font-weight="normal" textLength="12" lengthAdjust="spacingAndGlyphs" >12</text>
<text x="562" y="505" font-size="12" fill="#000" text-anchor="start" font-weight="normal" textLength="36" lengthAdjust="spacingAndGlyphs" >Visit 12</text>
<text x="100" y="524" font-size="12" fill="#000" text-anchor="end" font-weight="normal" textLength="12" lengthAdjust="spacingAndGlyphs" >22</text>
<text x="108" y="524" font-size="12" fill="#000" text-anchor="start" font-weight="normal" textLength="30" lengthAdjust="spacingAndGlyphs" >11009</text>
<text x="209" y="524" font-size="12" fill="#000" text-anchor="start" font-weight="normal" textLength="31" lengthAdjust="spacingAndGlyphs" >DIABP</text>
<text x="308" y="524" font-size="12" fill="#000" text-anchor="start" font-weight="normal" textLength="107" lengthAdjust="spacingAndGlyphs" >1988-03-06T10:30:00</text>
<text x="554" y="524" font-size="12" fill="#000" text-anchor="end" font-weight="normal" textLength="12" lengthAdjust="spacingAndGlyphs" >12</text>
<text x="562" y="524" font-size="12" fill="#000" text-anchor="start" font-weight="normal" textLength="36" lengthAdjust="spacingAndGlyphs" >Visit 12</text>
<text x="100" y="543" font-size="12" fill="#000" text-anchor="end" font-weight="normal" textLength="12" lengthAdjust="spacingAndGlyphs" >23</text>
<text x="108" y="543" font-size="12" fill="#000" text-anchor="start" font-weight="normal" textLength="30" lengthAdjust="spacingAndGlyphs" >11009</text>
<text x="209" y="543" font-size="12" fill="#000" text-anchor="start" font-weight="normal" textLength="31" lengthAdjust="spacingAndGlyphs" >DIABP</text>
<text x="308" y="543" font-size="12" fill="#000" text-anchor="start" font-weight="normal" textLength="58" lengthAdjust="spacingAndGlyphs" >1988-03-08</text>
<text x="554" y="543" font-size="12" fill="#000" text-anchor="end" font-weight="normal" textLength="12" lengthAdjust="spacingAndGlyphs" >14</text>
<text x="562" y="543" font-size="12" fill="#000" text-anchor="start" font-weight="normal" textLength="36" lengthAdjust="spacingAndGlyphs" >Visit 14</text>
<text x="100" y="562" font-size="12" fill="#000" text-anchor="end" font-weight="normal" textLength="12" lengthAdjust="spacingAndGlyphs" >24</text>
<text x="108" y="562" font-size="12" fill="#000" text-anchor="start" font-weight="normal" textLength="30" lengthAdjust="spacingAndGlyphs" >11009</text>
<text x="209" y="562" font-size="12" fill="#000" text-anchor="start" font-weight="normal" textLength="31" lengthAdjust="spacingAndGlyphs" >DIABP</text>
<text x="308" y="562" font-size="12" fill="#000" text-anchor="start" font-weight="normal" textLength="107" lengthAdjust="spacingAndGlyphs" >1988-03-08T04:00:00</text>
<text x="554" y="562" font-size="12" fill="#000" text-anchor="end" font-weight="normal" textLength="12" lengthAdjust="spacingAndGlyphs" >14</text>
<text x="562" y="562" font-size="12" fill="#000" text-anchor="start" font-weight="normal" textLength="36" lengthAdjust="spacingAndGlyphs" >Visit 14</text>
<text x="100" y="581" font-size="12" fill="#000" text-anchor="end" font-weight="normal" textLength="12" lengthAdjust="spacingAndGlyphs" >25</text>
<text x="108" y="581" font-size="12" fill="#000" text-anchor="start" font-weight="normal" textLength="30" lengthAdjust="spacingAndGlyphs" >11009</text>
<text x="209" y="581" font-size="12" fill="#000" text-anchor="start" font-weight="normal" textLength="31" lengthAdjust="spacingAndGlyphs" >DIABP</text>
<text x="308" y="581" font-size="12" fill="#000" text-anchor="start" font-weight="normal" textLength="107" lengthAdjust="spacingAndGlyphs" >1988-03-08T12:00:00</text>
<text x="554" y="581" font-size="12" fill="#000" text-anchor="end" font-weight="normal" textLength="12" lengthAdjust="spacingAndGlyphs" >14</text>
<text x="562" y="581" font-size="12" fill="#000" text-anchor="start" font-weight="normal" textLength="36" lengthAdjust="spacingAndGlyphs" >Visit 14</text>
<text x="100" y="600" font-size="12" fill="#000" text-anchor="end" font-weight="normal" textLength="12" lengthAdjust="spacingAndGlyphs" >26</text>
<path d="M715.5 121 L719.5 117 L722.5 121 Z" fill="#8a8a8a"/>
<path d="M715.5 575.5 L719 579.5 L722.5 575.5 Z" fill="#8a8a8a"/>
<rect x="712.5" y="127.5" width="13" height="6" rx="2" fill="#f8f8f8" stroke="#7a7a7a"/>
<rect x="714" y="129" width="5" height="3" fill="#e8e8e8"/><rect x="719" y="129" width="5" height="3" fill="#cccccc"/>
<path d="M114 591 L110 594 L114 597 Z" fill="#8a8a8a"/>
<path d="M700 591 L704 594.5 L700 598 Z" fill="#8a8a8a"/>
<rect x="120.5" y="587.5" width="566" height="13" rx="2" fill="url(#gThumbH)" stroke="#9a9a9a"/>
<rect x="399.2" y="590" width="1.7" height="7" rx="0.8" fill="#5a5a5a"/>
<rect x="402.2" y="590" width="1.7" height="7" rx="0.8" fill="#5a5a5a"/>
<rect x="405.2" y="590" width="1.7" height="7" rx="0.8" fill="#5a5a5a"/>
<rect x="8" y="602" width="719" height="1" fill="#9aa4d0" />
<rect x="8" y="603" width="719" height="18" fill="#e0e6f0" />
<rect x="8" y="620" width="719" height="1" fill="#eaeffa" />
<rect x="649" y="604" width="1" height="16" fill="#9a9cb0" />
<path d="M655 612 L661 606 L667 612" fill="none" stroke="#2a8ac8" stroke-width="2"/>
<rect x="657" y="611" width="8" height="6" fill="#d8ecf8" stroke="#7ab8dc" stroke-width="0.8"/>
<rect x="660" y="612" width="3" height="5" fill="#a06a10"/>
<rect x="677.5" y="605.5" width="12" height="12" fill="#ffffff" stroke="#6a6a6a"/>
<rect x="679" y="607" width="9" height="9" fill="#e0e0e0"/>
<path d="M695 609 L703 609 L699 614 Z" fill="#000"/>
<rect x="724" y="609" width="2" height="2" fill="#f6f8fc" />
<rect x="723.5" y="608.5" width="1.6" height="1.6" fill="#aab2c8" />
<rect x="721" y="612" width="2" height="2" fill="#f6f8fc" />
<rect x="720.5" y="611.5" width="1.6" height="1.6" fill="#aab2c8" />
<rect x="724" y="612" width="2" height="2" fill="#f6f8fc" />
<rect x="723.5" y="611.5" width="1.6" height="1.6" fill="#aab2c8" />
<rect x="718" y="615" width="2" height="2" fill="#f6f8fc" />
<rect x="717.5" y="614.5" width="1.6" height="1.6" fill="#aab2c8" />
<rect x="721" y="615" width="2" height="2" fill="#f6f8fc" />
<rect x="720.5" y="614.5" width="1.6" height="1.6" fill="#aab2c8" />
<rect x="724" y="615" width="2" height="2" fill="#f6f8fc" />
<rect x="723.5" y="614.5" width="1.6" height="1.6" fill="#aab2c8" />
<rect x="715" y="618" width="2" height="2" fill="#f6f8fc" />
<rect x="714.5" y="617.5" width="1.6" height="1.6" fill="#aab2c8" />
<rect x="718" y="618" width="2" height="2" fill="#f6f8fc" />
<rect x="717.5" y="617.5" width="1.6" height="1.6" fill="#aab2c8" />
<rect x="721" y="618" width="2" height="2" fill="#f6f8fc" />
<rect x="720.5" y="617.5" width="1.6" height="1.6" fill="#aab2c8" />
<rect x="724" y="618" width="2" height="2" fill="#f6f8fc" />
<rect x="723.5" y="617.5" width="1.6" height="1.6" fill="#aab2c8" />
<path d="M640.5 0 v11.5 a4.5 4.5 0 0 0 4.5 4.5 h19 v-16 z" fill="url(#gBtn)" stroke="#4a4a4a" stroke-width="1"/>
<rect x="664.5" y="0" width="23" height="16" fill="url(#gBtn)" stroke="#4a4a4a" stroke-width="1"/>
<path d="M687.5 0 v16 h36 a4.5 4.5 0 0 0 4.5 -4.5 v-11.5 z" fill="url(#gClose)" stroke="#5a2a1a" stroke-width="1"/>
<rect x="647.5" y="8.5" width="10" height="4" fill="#ffffff" stroke="#464a5a" stroke-width="1"/>
<rect x="671.5" y="4.5" width="9" height="8" fill="#f0f0f0" stroke="#464a5a" stroke-width="1"/>
<rect x="673.5" y="6.5" width="5" height="3" fill="#8a8a8a" stroke="#464a5a" stroke-width="1"/>
<path d="M704.5 6 L710 10.5 M710 6 L704.5 10.5" stroke="#3c4458" stroke-width="4.2" stroke-linecap="square"/>
<path d="M704.5 6 L710 10.5 M710 6 L704.5 10.5" stroke="#f4f4f4" stroke-width="2.3" stroke-linecap="square"/>
<path d="M641.5 1.5 h22 M665.5 1.5 h21 M688.5 1.5 h38" stroke="#ffffff" stroke-opacity="0.45" stroke-width="1"/>
<path d="M663.5 2 v14 M665.5 2 v14 M686.5 2 v14 M688.5 2 v14" stroke="#ffffff" stroke-opacity="0.3" stroke-width="1"/>
<rect x="7" y="0" width="721" height="1" fill="#0a0a0a"/>
<rect x="8.5" y="6.5" width="14" height="12" fill="#ffffff"/>
<path d="M9 12.5 h13 M9 15.5 h13 M13.5 7 v11 M16.5 7 v11 M19.5 7 v11" stroke="#8aa8d8" stroke-width="1"/>
<path d="M9 9.5 h13" stroke="#f4a0a0" stroke-width="1"/>
<path d="M10.5 7 v11" stroke="#f4b4b4" stroke-width="1"/>
<path d="M9 9.5 h4 M10.5 7 v5" stroke="#f05050" stroke-width="1"/>
<rect x="8.6" y="6.6" width="13.8" height="11.8" fill="none" stroke="#1c58b0" stroke-width="1.2"/>
<circle cx="17.3" cy="12.3" r="1.4" fill="#000"/>
<path d="M14.5 15.5 L17.5 14.8 L18.5 12 L19.3 14.8 L24 15.5 L19.3 16.3 L18.5 21 L17.6 16.3 Z" fill="#1a88d0"/>
<text x="29" y="18" font-size="11" fill="#000" font-weight="bold" textLength="45" lengthAdjust="spacing" style="stroke-width:0.3px">vs - JMP</text></svg>
</body></html>
